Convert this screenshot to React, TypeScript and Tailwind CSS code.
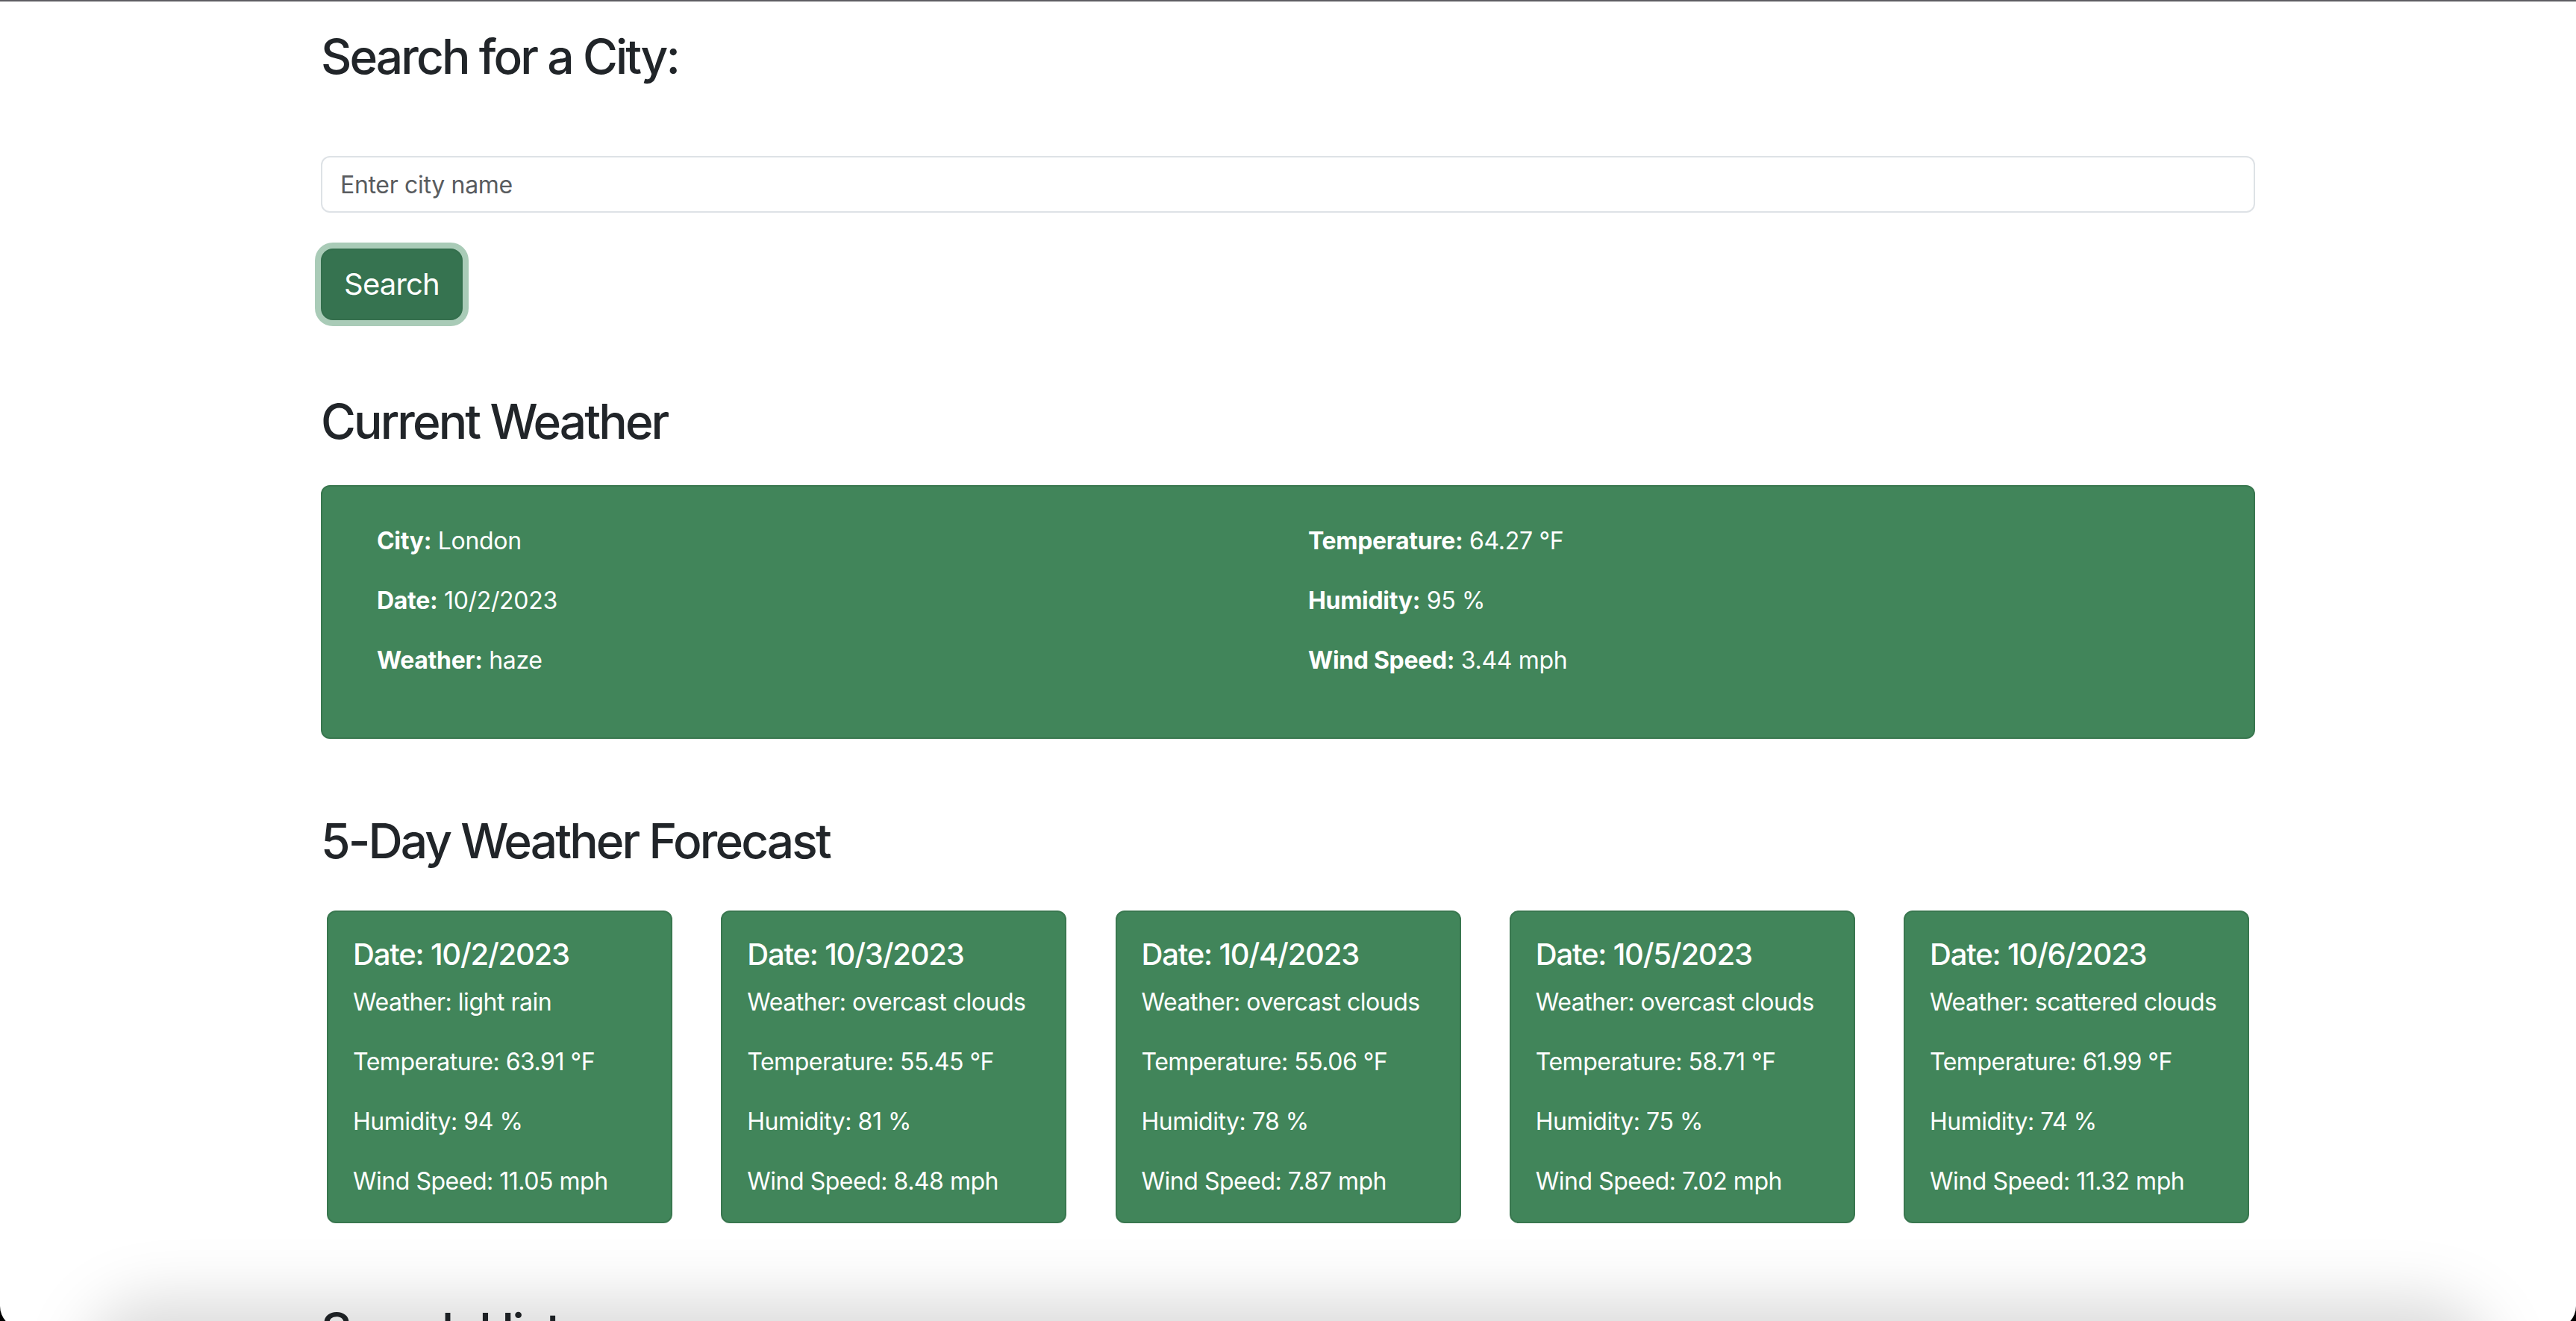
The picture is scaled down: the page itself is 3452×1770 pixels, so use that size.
const current = {
  left: [
    ["City:", "London"],
    ["Date:", "10/2/2023"],
    ["Weather:", "haze"],
  ],
  right: [
    ["Temperature:", "64.27 °F"],
    ["Humidity:", "95 %"],
    ["Wind Speed:", "3.44 mph"],
  ],
};

const forecast = [
  { date: "10/2/2023", weather: "light rain", temp: "63.91", humidity: 94, wind: "11.05" },
  { date: "10/3/2023", weather: "overcast clouds", temp: "55.45", humidity: 81, wind: "8.48" },
  { date: "10/4/2023", weather: "overcast clouds", temp: "55.06", humidity: 78, wind: "7.87" },
  { date: "10/5/2023", weather: "overcast clouds", temp: "58.71", humidity: 75, wind: "7.02" },
  { date: "10/6/2023", weather: "scattered clouds", temp: "61.99", humidity: 74, wind: "11.32" },
];

function InfoColumn({ rows }: { rows: string[][] }) {
  return (
    <div>
      {rows.map(([label, value]) => (
        <p key={label} className="mb-[32px] leading-[48px]">
          <strong className="font-bold">{label}</strong> {value}
        </p>
      ))}
    </div>
  );
}

export default function App() {
  return (
    <div className="relative h-[1770px] w-full overflow-hidden bg-white font-['Inter','Helvetica_Neue',Arial,sans-serif] text-[32px] text-[#212529]">
      <div className="h-[2px] bg-[#5e5d62]" />

      <div className="mx-auto w-[2592px]">
        <h2 className="mt-[35px] text-[64px] font-[550] leading-[77px] tracking-[-0.045em]">
          Search for a City:
        </h2>

        <input
          type="text"
          placeholder="Enter city name"
          className="mt-[95px] block h-[76px] w-full rounded-[12px] border-2 border-[#dee2e6] px-[24px] text-[32px] tracking-[-0.01em] outline-none placeholder:text-[#595c5f]"
        />

        <button className="mt-[48px] block h-[96px] w-[190px] rounded-[16px] border-2 border-[#346f4d] bg-[#367350] text-[40px] tracking-[-0.02em] text-white ring-8 ring-[#a9cbb7]">
          Search
        </button>

        <h2 className="mt-[97px] text-[64px] font-[550] leading-[77px] tracking-[-0.045em]">
          Current Weather
        </h2>

        <div className="mt-[47px] rounded-[12px] border-2 border-[#39774f] bg-[#41855a] px-[73px] pb-[47px] pt-[49px] tracking-[-0.01em] text-white">
          <div className="grid grid-cols-2 gap-x-[54px]">
            <InfoColumn rows={current.left} />
            <InfoColumn rows={current.right} />
          </div>
        </div>

        <h2 className="mt-[98px] text-[64px] font-[550] leading-[77px] tracking-[-0.045em]">
          5-Day Weather Forecast
        </h2>

        <div className="mt-[55px] flex justify-between px-[8px]">
          {forecast.map((day) => (
            <div
              key={day.date}
              className="w-[463px] rounded-[12px] border-2 border-[#39774f] bg-[#41855a] px-[33px] pb-[30px] pt-[33px] tracking-[-0.015em] text-white"
            >
              <h5 className="mb-[16px] text-[40px] font-medium leading-[48px] tracking-[-0.03em]">
                Date: {day.date}
              </h5>
              <p className="mb-[32px] leading-[48px]">Weather: {day.weather}</p>
              <p className="mb-[32px] leading-[48px]">Temperature: {day.temp} °F</p>
              <p className="mb-[32px] leading-[48px]">Humidity: {day.humidity} %</p>
              <p className="leading-[48px]">Wind Speed: {day.wind} mph</p>
            </div>
          ))}
        </div>

        <h2 className="mt-[105px] text-[64px] font-[550] leading-[77px] tracking-[-0.045em]">
          Search History
        </h2>
      </div>

      {/* soft shadow along the bottom edge */}
      <div className="pointer-events-none absolute bottom-[-170px] left-[110px] right-[110px] h-[200px] rounded-[120px] bg-black/[0.14] blur-[40px]" />
      {/* window corners */}
      <div className="pointer-events-none absolute bottom-[-10px] left-0 right-0 top-0 rounded-b-[30px] shadow-[0_0_0_40px_#000]" />
    </div>
  );
}
